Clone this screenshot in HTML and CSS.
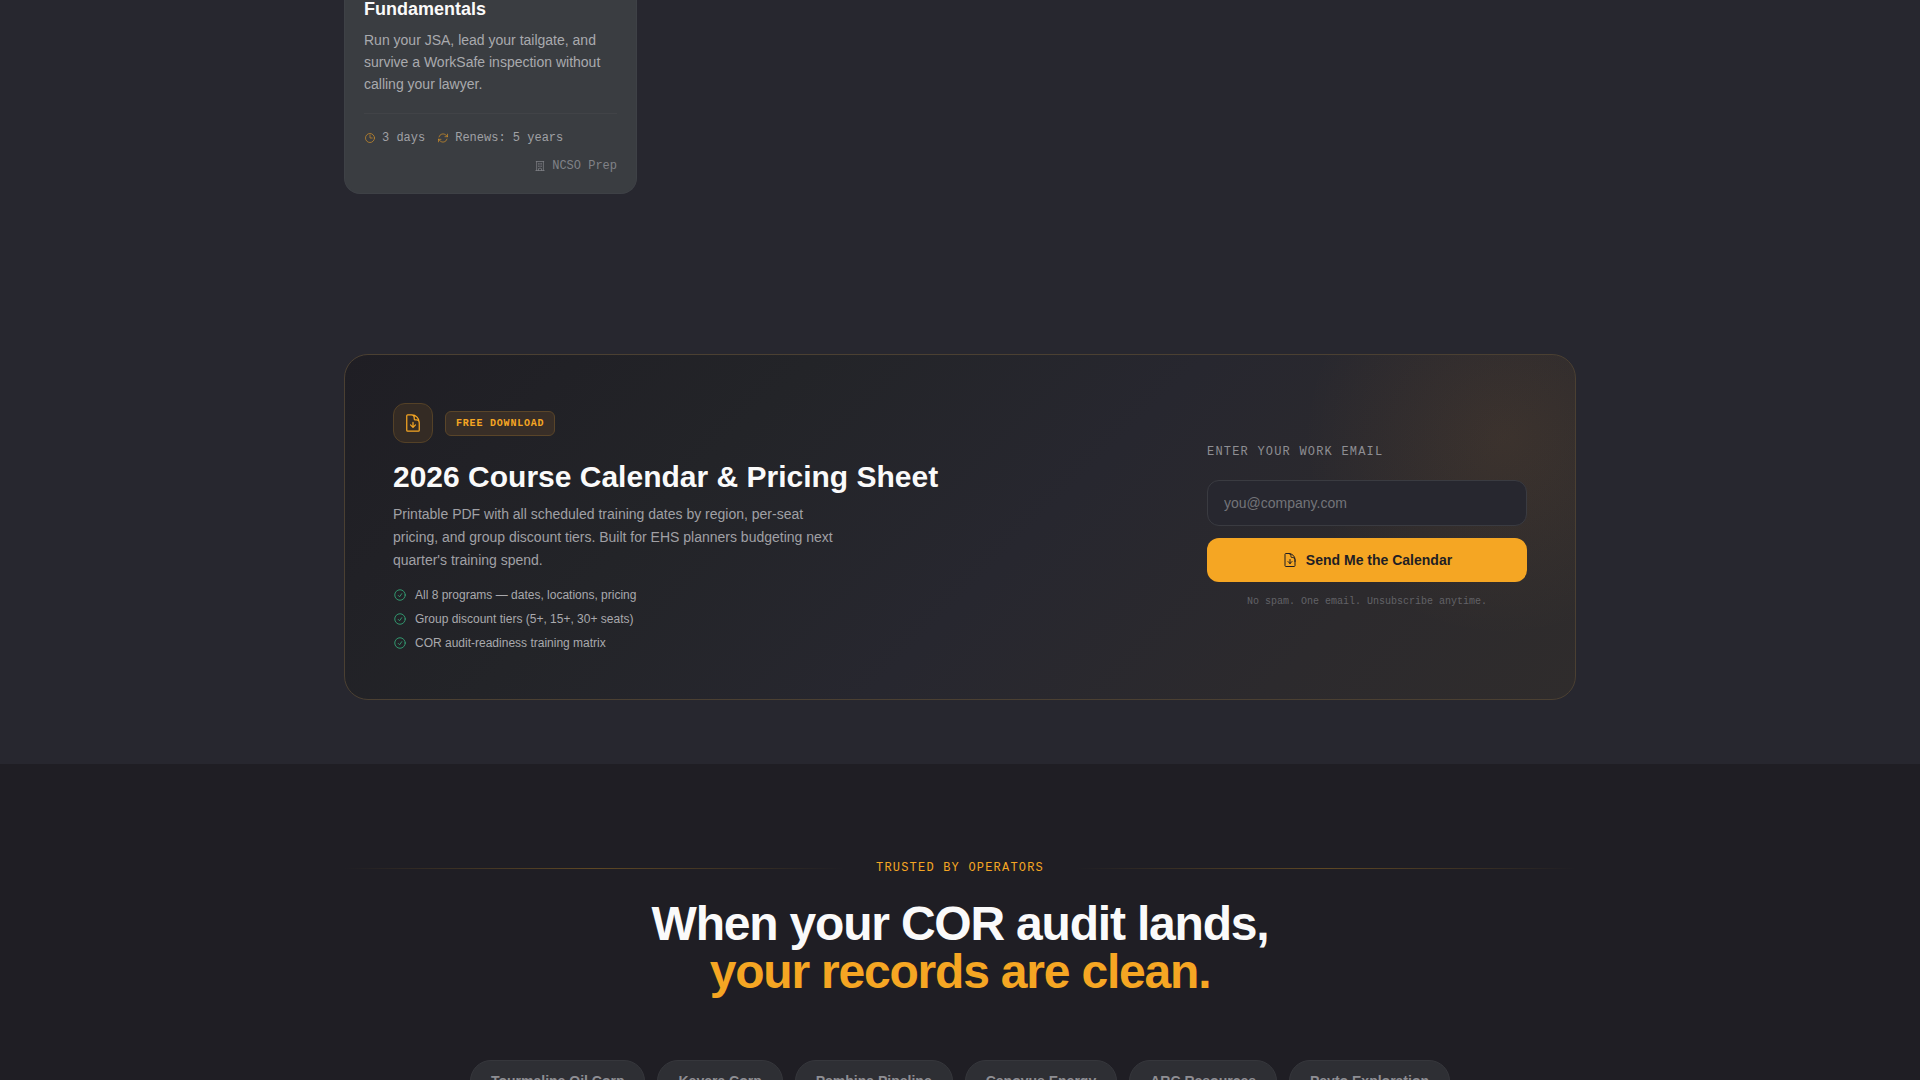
FILE: index.html
```html
<!DOCTYPE html>
<html lang="en">
<head>
  <meta charset="UTF-8" />
  <meta name="viewport" content="width=device-width, initial-scale=1.0"/>
  <title>Safety Training Programs</title>
  <link rel="stylesheet" href="styles.css">
</head>
<body>

  <!-- Programs Section -->
  <section class="programs">
    <div class="container">
      <div class="course-grid">
        <article class="course-card">
          <h3>Fundamentals</h3>
          <p class="course-text">Run your JSA, lead your tailgate, and survive a WorkSafe inspection without calling your lawyer.</p>
          <div class="course-meta">
            <span class="meta-item">
              <svg class="icon icon-xs amber" viewBox="0 0 24 24"><path d="M12 6v6h4.5m4.5 0a9 9 0 1 1-18 0 9 9 0 0 1 18 0Z"/></svg>
              3 days
            </span>
            <span class="meta-item">
              <svg class="icon icon-xs amber" viewBox="0 0 24 24"><path d="M16.023 9.348h4.992v-.001M2.985 19.644v-4.992m0 0h4.992m-4.993 0 3.181 3.183a8.25 8.25 0 0 0 13.803-3.7M4.031 9.865a8.25 8.25 0 0 1 13.803-3.7l3.181 3.182m0-4.991v4.99"/></svg>
              Renews: 5 years
            </span>
            <span class="meta-item meta-tag">
              <svg class="icon icon-xs" viewBox="0 0 24 24"><path d="M3.75 21h16.5M4.5 3h15M5.25 3v18m13.5-18v18M9 6.75h1.5m-1.5 3h1.5m-1.5 3h1.5m3-6H15m-1.5 3H15m-1.5 3H15M9 21v-3.375c0-.621.504-1.125 1.125-1.125h3.75c.621 0 1.125.504 1.125 1.125V21"/></svg>
              NCSO Prep
            </span>
          </div>
        </article>
      </div>

      <!-- Calendar download -->
      <div class="download">
        <div class="download-info">
          <div class="download-top">
            <span class="icon-box">
              <svg class="icon icon-md" viewBox="0 0 24 24"><path d="M19.5 14.25v-2.625a3.375 3.375 0 0 0-3.375-3.375h-1.5A1.125 1.125 0 0 1 13.5 7.125v-1.5a3.375 3.375 0 0 0-3.375-3.375H8.25m.75 12 3 3m0 0 3-3m-3 3v-6m-1.5-9H5.625c-.621 0-1.125.504-1.125 1.125v17.25c0 .621.504 1.125 1.125 1.125h12.75c.621 0 1.125-.504 1.125-1.125V11.25a9 9 0 0 0-9-9Z"/></svg>
            </span>
            <span class="badge">FREE DOWNLOAD</span>
          </div>
          <h2>2026 Course Calendar &amp; Pricing Sheet</h2>
          <p class="download-text">Printable PDF with all scheduled training dates by region, per-seat pricing, and group discount tiers. Built for EHS planners budgeting next quarter's training spend.</p>
          <ul class="checks">
            <li>
              <svg class="icon icon-sm green" viewBox="0 0 24 24"><path d="M9 12.75 11.25 15 15 9.75M21 12a9 9 0 1 1-18 0 9 9 0 0 1 18 0Z"/></svg>
              All 8 programs — dates, locations, pricing
            </li>
            <li>
              <svg class="icon icon-sm green" viewBox="0 0 24 24"><path d="M9 12.75 11.25 15 15 9.75M21 12a9 9 0 1 1-18 0 9 9 0 0 1 18 0Z"/></svg>
              Group discount tiers (5+, 15+, 30+ seats)
            </li>
            <li>
              <svg class="icon icon-sm green" viewBox="0 0 24 24"><path d="M9 12.75 11.25 15 15 9.75M21 12a9 9 0 1 1-18 0 9 9 0 0 1 18 0Z"/></svg>
              COR audit-readiness training matrix
            </li>
          </ul>
        </div>

        <form class="download-form">
          <label for="email">ENTER YOUR WORK EMAIL</label>
          <input type="email" id="email" placeholder="you@company.com" required />
          <button type="submit">
            <svg class="icon icon-btn" viewBox="0 0 24 24"><path d="M19.5 14.25v-2.625a3.375 3.375 0 0 0-3.375-3.375h-1.5A1.125 1.125 0 0 1 13.5 7.125v-1.5a3.375 3.375 0 0 0-3.375-3.375H8.25m.75 12 3 3m0 0 3-3m-3 3v-6m-1.5-9H5.625c-.621 0-1.125.504-1.125 1.125v17.25c0 .621.504 1.125 1.125 1.125h12.75c.621 0 1.125-.504 1.125-1.125V11.25a9 9 0 0 0-9-9Z"/></svg>
            Send Me the Calendar
          </button>
          <p class="form-note">No spam. One email. Unsubscribe anytime.</p>
        </form>
      </div>
    </div>
  </section>

  <!-- Trusted By Section -->
  <section class="trusted">
    <div class="container">
      <p class="eyebrow">TRUSTED BY OPERATORS</p>
      <h2>When your COR audit lands,<br /><span>your records are clean.</span></h2>
      <ul class="clients">
        <li>Tourmaline Oil Corp</li>
        <li>Keyera Corp</li>
        <li>Pembina Pipeline</li>
        <li>Cenovus Energy</li>
        <li>ARC Resources</li>
        <li>Peyto Exploration</li>
      </ul>
    </div>
  </section>

</body>
</html>
```
FILE: styles.css
```css
* { box-sizing: border-box; margin: 0; padding: 0; }
body { font-family: "Liberation Sans", Arial, sans-serif; background: #1f1e24; color: #fafafa; min-height: 100vh; }
ul { list-style: none; }
.container { max-width: 1280px; margin: 0 auto; padding: 0 24px; }

/* Icons */
.icon { flex-shrink: 0; fill: none; stroke: currentColor; stroke-width: 1.5; stroke-linecap: round; stroke-linejoin: round; }
.icon-xs { width: 12px; height: 12px; }
.icon-sm { width: 14px; height: 14px; }
.icon-btn { width: 16px; height: 16px; }
.icon-md { width: 20px; height: 20px; }
.amber { color: #c58a2b; }
.green { color: #34a577; }

/* Programs */
.programs { background: #27272f; padding-bottom: 64px; }
.course-grid { display: grid; grid-template-columns: repeat(4, 1fr); gap: 20px; margin-bottom: 160px; }
.course-card { background: #3a3d41; border: 1px solid #3e4146; border-top: 0; border-radius: 0 0 16px 16px; padding: 0 19px 19px; }
.course-card h3 { font-size: 18px; line-height: 18px; margin-bottom: 11px; }
.course-text { font-size: 14px; line-height: 22px; color: #a9aaae; margin-bottom: 18px; }
.course-meta { display: flex; flex-wrap: wrap; gap: 12px; border-top: 1px solid #414347; padding-top: 16px; font-family: "Liberation Mono", monospace; font-size: 12px; line-height: 16px; color: #a0a1a5; }
.meta-item { display: flex; align-items: center; gap: 6px; }
.meta-tag { margin-left: auto; color: #808287; }

/* Download panel */
.download {
  display: flex; align-items: center; justify-content: space-between; gap: 40px;
  padding: 48px; border: 1px solid #4b4032; border-radius: 24px;
  background:
    radial-gradient(circle at calc(100% - 72px) 82px, rgba(245, 150, 50, 0.08), transparent 200px),
    linear-gradient(135deg, #1f1e24 0%, #232428 30%, #27272f 55%, #2c2a2d 80%, #2f2c2c 100%);
}
.download-top { display: flex; align-items: center; gap: 12px; margin-bottom: 16px; }
.icon-box { display: flex; align-items: center; justify-content: center; width: 40px; height: 40px; color: #f5a623; background: #342b24; border: 1px solid #544127; border-radius: 12px; }
.badge { font-family: "Liberation Mono", monospace; font-size: 10px; font-weight: bold; line-height: 15px; letter-spacing: 0.08em; color: #f5a623; background: #382e27; border: 1px solid #5a4529; border-radius: 6px; padding: 4px 10px; }
.download h2 { font-size: 30px; line-height: 36px; margin-bottom: 8px; }
.download-text { max-width: 448px; font-size: 14px; line-height: 23px; color: #a0a0a5; margin-bottom: 15px; }
.checks { display: flex; flex-direction: column; gap: 8px; }
.checks li { display: flex; align-items: center; gap: 8px; font-size: 12px; line-height: 16px; color: #a9a9ad; }

.download-form { display: flex; flex-direction: column; gap: 12px; flex: 0 0 320px; }
.download-form label { font-family: "Liberation Mono", monospace; font-size: 12px; line-height: 16px; letter-spacing: 0.1em; color: #8e8e93; margin-bottom: 8px; }
.download-form input { height: 46px; padding: 0 16px; font: inherit; font-size: 14px; color: #fafafa; background: #27272f; border: 1px solid #3a3b41; border-radius: 12px; }
.download-form input::placeholder { color: #737479; }
.download-form button { display: flex; align-items: center; justify-content: center; gap: 8px; height: 44px; font: inherit; font-size: 14px; font-weight: bold; color: #1f1e24; background: #f5a623; border: 0; border-radius: 12px; cursor: pointer; }
.form-note { font-family: "Liberation Mono", monospace; font-size: 10px; line-height: 16px; text-align: center; color: #626267; }

/* Trusted by */
.trusted { padding: 96px 0; text-align: center; }
.eyebrow { display: flex; align-items: center; gap: 32px; margin-bottom: 24px; font-family: "Liberation Mono", monospace; font-size: 12px; line-height: 16px; letter-spacing: 0.1em; color: #f5a623; }
.eyebrow::before, .eyebrow::after { content: ""; flex: 1; height: 1px; background: linear-gradient(90deg, transparent, #5f4824, transparent); }
.trusted h2 { font-size: 48px; line-height: 48px; letter-spacing: -0.025em; margin-bottom: 64px; }
.trusted h2 span { color: #f5a623; }
.clients { display: flex; flex-wrap: wrap; justify-content: center; gap: 12px; }
.clients li { font-size: 14px; font-weight: bold; line-height: 20px; color: #8e8e93; background: #2e2f34; border: 1px solid #36373c; border-radius: 24px; padding: 10px 20px; }

@media (max-width: 900px) {
  .course-grid { grid-template-columns: 1fr; }
  .download { flex-direction: column; align-items: stretch; }
  .download-form { flex-basis: auto; }
}
```
